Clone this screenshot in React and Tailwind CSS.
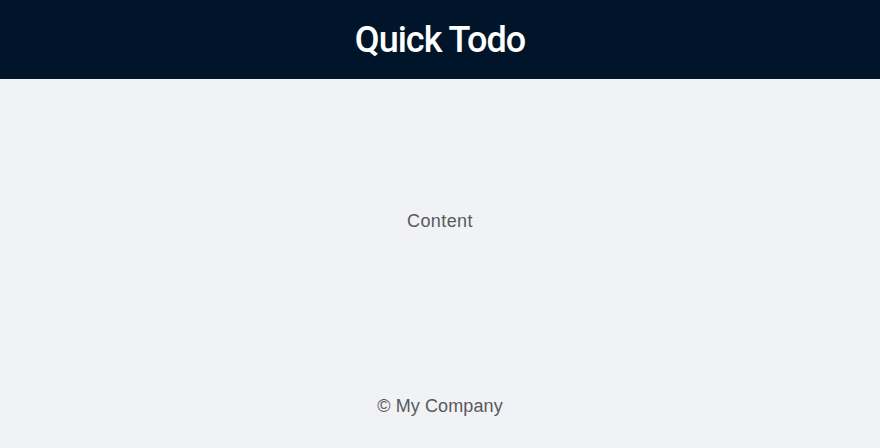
export default function App() {
  return (
    <div className="flex h-screen w-full flex-col bg-[#f0f2f5]" style={{ fontFamily: '"Liberation Sans", Arial, sans-serif' }}>
      <header className="flex h-[79px] shrink-0 items-center justify-center bg-[#001529]">
        <h1 className="text-[36px] leading-none font-medium tracking-[-1px] text-white" style={{ fontFamily: 'Roboto, "Liberation Sans", sans-serif' }}>
          Quick Todo
        </h1>
      </header>
      <main className="flex flex-1 items-center justify-center pt-[4px]">
        <span className="text-[18px] leading-[28px] tracking-[0.4px] text-[#58595b]">Content</span>
      </main>
      <footer className="flex h-[89px] shrink-0 items-center justify-center pt-[4px]">
        <span className="text-[18px] leading-[28px] tracking-[0.1px] text-[#58595b]">© My Company</span>
      </footer>
    </div>
  );
}
